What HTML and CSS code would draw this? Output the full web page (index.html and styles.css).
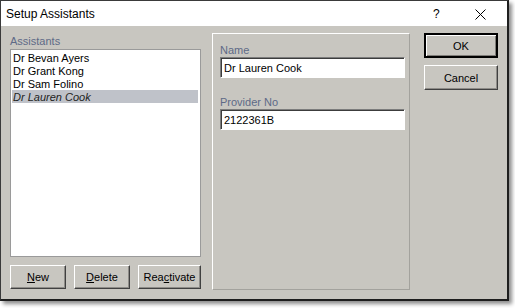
FILE: index.html
```html
<html>

<head>
  <title>Setup Assistants</title>
  <link rel="stylesheet" href="styles.css">
</head>

<body>
  <div class="dialog">

    <!-- title bar -->
    <div class="titlebar">
      <span class="title">Setup Assistants</span>
      <span class="help">?</span>
      <span class="close">
        <svg width="11" height="11" viewBox="0 0 11 11">
          <path d="M0.5 0.5 L10.5 10.5 M10.5 0.5 L0.5 10.5" stroke="#000" stroke-width="1" fill="none"/>
        </svg>
      </span>
    </div>

    <div class="content">

      <!-- assistants list -->
      <div class="left">
        <div class="label">Assistants</div>
        <div class="listbox">
          <div class="item">Dr Bevan Ayers</div>
          <div class="item">Dr Grant Kong</div>
          <div class="item">Dr Sam Folino</div>
          <div class="item selected">Dr Lauren Cook</div>
        </div>
        <div class="list-buttons">
          <button class="btn new"><u>N</u>ew</button>
          <button class="btn delete"><u>D</u>elete</button>
          <button class="btn reactivate">Rea<u>c</u>tivate</button>
        </div>
      </div>

      <!-- details -->
      <div class="panel">
        <div class="label">Name</div>
        <div class="field">Dr Lauren Cook</div>
        <div class="label provider">Provider No</div>
        <div class="field">2122361B</div>
      </div>

      <!-- dialog buttons -->
      <div class="right">
        <button class="btn ok">OK</button>
        <button class="btn cancel">Cancel</button>
      </div>

    </div>
  </div>
</body>

</html>
```
FILE: styles.css
```css
* {
  margin: 0;
  box-sizing: border-box;
  font-family: "Liberation Sans", Arial, sans-serif;
}

body {
  background: #ffffff;
}

.dialog {
  width: 509px;
  height: 301px;
  background: #c8c6c0;
  border: 1px solid #3a3a3a;
  border-right: 2px solid #1e1e1e;
  border-bottom: 2px solid #1e1e1e;
  box-shadow: 3px 3px 4px rgba(0, 0, 0, 0.45);
  display: flex;
  flex-direction: column;
}

.titlebar {
  height: 25px;
  background: #ffffff;
  display: flex;
  align-items: center;
  padding-left: 5px;
}

.title {
  font-size: 12px;
  color: #000;
  flex: 1;
}

.help {
  font-size: 12px;
  width: 42px;
  color: #000;
}

.close {
  width: 32px;
  display: flex;
  padding-top: 1px;
}

.content {
  display: flex;
  padding: 0 9px;
  font-size: 11px;
}

.label {
  color: #5e6a87;
  font-size: 11px;
  line-height: 13px;
}

.left {
  width: 191px;
  padding-top: 9px;
}

.listbox {
  margin-top: 1px;
  height: 208px;
  background: #fff;
  border: 1px solid #9a9a9a;
  padding: 1px 0 0 1px;
}

.item {
  height: 13px;
  line-height: 14px;
  padding-left: 1px;
  color: #000;
}

.item.selected {
  background: #bfc2c9;
  font-style: italic;
  color: #222;
  margin-right: 2px;
}

.list-buttons {
  display: flex;
  gap: 8px;
  margin-top: 8px;
}

.btn {
  height: 24px;
  font-size: 11px;
  color: #000;
  background: #c8c6c0;
  border: 1px solid;
  border-color: #ffffff #404040 #404040 #ffffff;
  box-shadow: inset -1px -1px 0 #8e8c88;
  padding: 0;
}

.btn.new { width: 56px; }
.btn.delete { width: 56px; }
.btn.reactivate { width: 63px; }

.panel {
  margin: 7px 0 0 11px;
  width: 200px;
  height: 257px;
  border: 1px solid;
  border-color: #ffffff #a3a29d #a3a29d #ffffff;
  padding: 10px 0 0 7px;
}

.panel .provider {
  margin-top: 18px;
}

.field {
  margin-top: 0;
  width: 185px;
  height: 21px;
  background: #fff;
  border: 1px solid;
  border-color: #7c7c7c #ffffff #ffffff #7c7c7c;
  box-shadow: inset 1px 1px 0 #3c3c3c;
  font-size: 11px;
  line-height: 20px;
  padding-left: 3px;
  color: #000;
}

.right {
  margin: 7px 0 0 14px;
  display: flex;
  flex-direction: column;
  gap: 7px;
}

.right .btn {
  width: 74px;
  height: 25px;
}

.btn.ok {
  border: 2px solid #000;
  box-shadow: inset 1px 1px 0 #fff, inset -1px -1px 0 #7e7c78;
}
```
